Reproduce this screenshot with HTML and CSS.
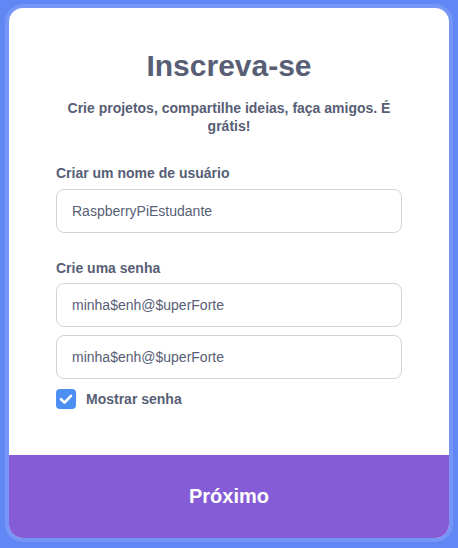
FILE: index.html
```html
<!DOCTYPE html>
<html lang="pt">
<head>
<meta charset="utf-8">
<link rel="stylesheet" href="styles.css">
</head>
<body>
<div class="card">
  <div class="content">
    <h1 class="title">Inscreva-se</h1>
    <p class="subtitle">Crie projetos, compartilhe ideias, faça amigos. É grátis!</p>
    <label class="label label-first">Criar um nome de usuário</label>
    <div class="input">RaspberryPiEstudante</div>
    <label class="label label-second">Crie uma senha</label>
    <div class="input">minha$enh@$uperForte</div>
    <div class="input input-gap">minha$enh@$uperForte</div>
    <div class="check-row">
      <span class="checkbox">
        <svg width="20" height="20" viewBox="0 0 20 20"><path d="M5 10.2 L8.5 13.6 L15 6.8" fill="none" stroke="#fff" stroke-width="2.6" stroke-linecap="round" stroke-linejoin="round"/></svg>
      </span>
      <span class="check-label">Mostrar senha</span>
    </div>
  </div>
  <div class="footer">Próximo</div>
</div>
</body>
</html>
```
FILE: styles.css
```css
html, body {
  margin: 0;
  padding: 0;
}
body {
  background: #6187f4;
  font-family: "Liberation Sans", Arial, sans-serif;
  color: #575e75;
  height: 548px;
  overflow: hidden;
}
.card {
  margin: 4px 5px 0 5px;
  height: 530px;
  border: 4px solid #7596f7;
  border-radius: 18px;
  background: #fff;
  overflow: hidden;
  display: flex;
  flex-direction: column;
}
.content {
  flex: 1;
  padding: 40px 47px 0 47px;
  display: flex;
  flex-direction: column;
}
.title {
  margin: 0;
  font-size: 30px;
  line-height: 36px;
  font-weight: bold;
  text-align: center;
}
.subtitle {
  margin: 15px 0 0 0;
  font-size: 14px;
  line-height: 18px;
  font-weight: bold;
  text-align: center;
}
.label {
  display: block;
  font-size: 14px;
  line-height: 18px;
  font-weight: bold;
  margin-bottom: 7px;
}
.label-first { margin-top: 29px; }
.label-second { margin-top: 26px; margin-bottom: 6px; }
.input {
  box-sizing: border-box;
  height: 44px;
  border: 1px solid #d3d3d6;
  border-radius: 8px;
  padding: 0 15px;
  display: flex;
  align-items: center;
  font-size: 14px;
}
.input-gap { margin-top: 8px; }
.check-row {
  display: flex;
  align-items: center;
  margin-top: 10px;
  gap: 10px;
}
.checkbox {
  width: 20px;
  height: 20px;
  border-radius: 4px;
  background: #4c8ff2;
  display: flex;
}
.check-label {
  font-size: 14px;
  font-weight: bold;
}
.footer {
  height: 83px;
  background: #855cd6;
  color: #fff;
  font-size: 20px;
  font-weight: bold;
  display: flex;
  align-items: center;
  justify-content: center;
}
```
